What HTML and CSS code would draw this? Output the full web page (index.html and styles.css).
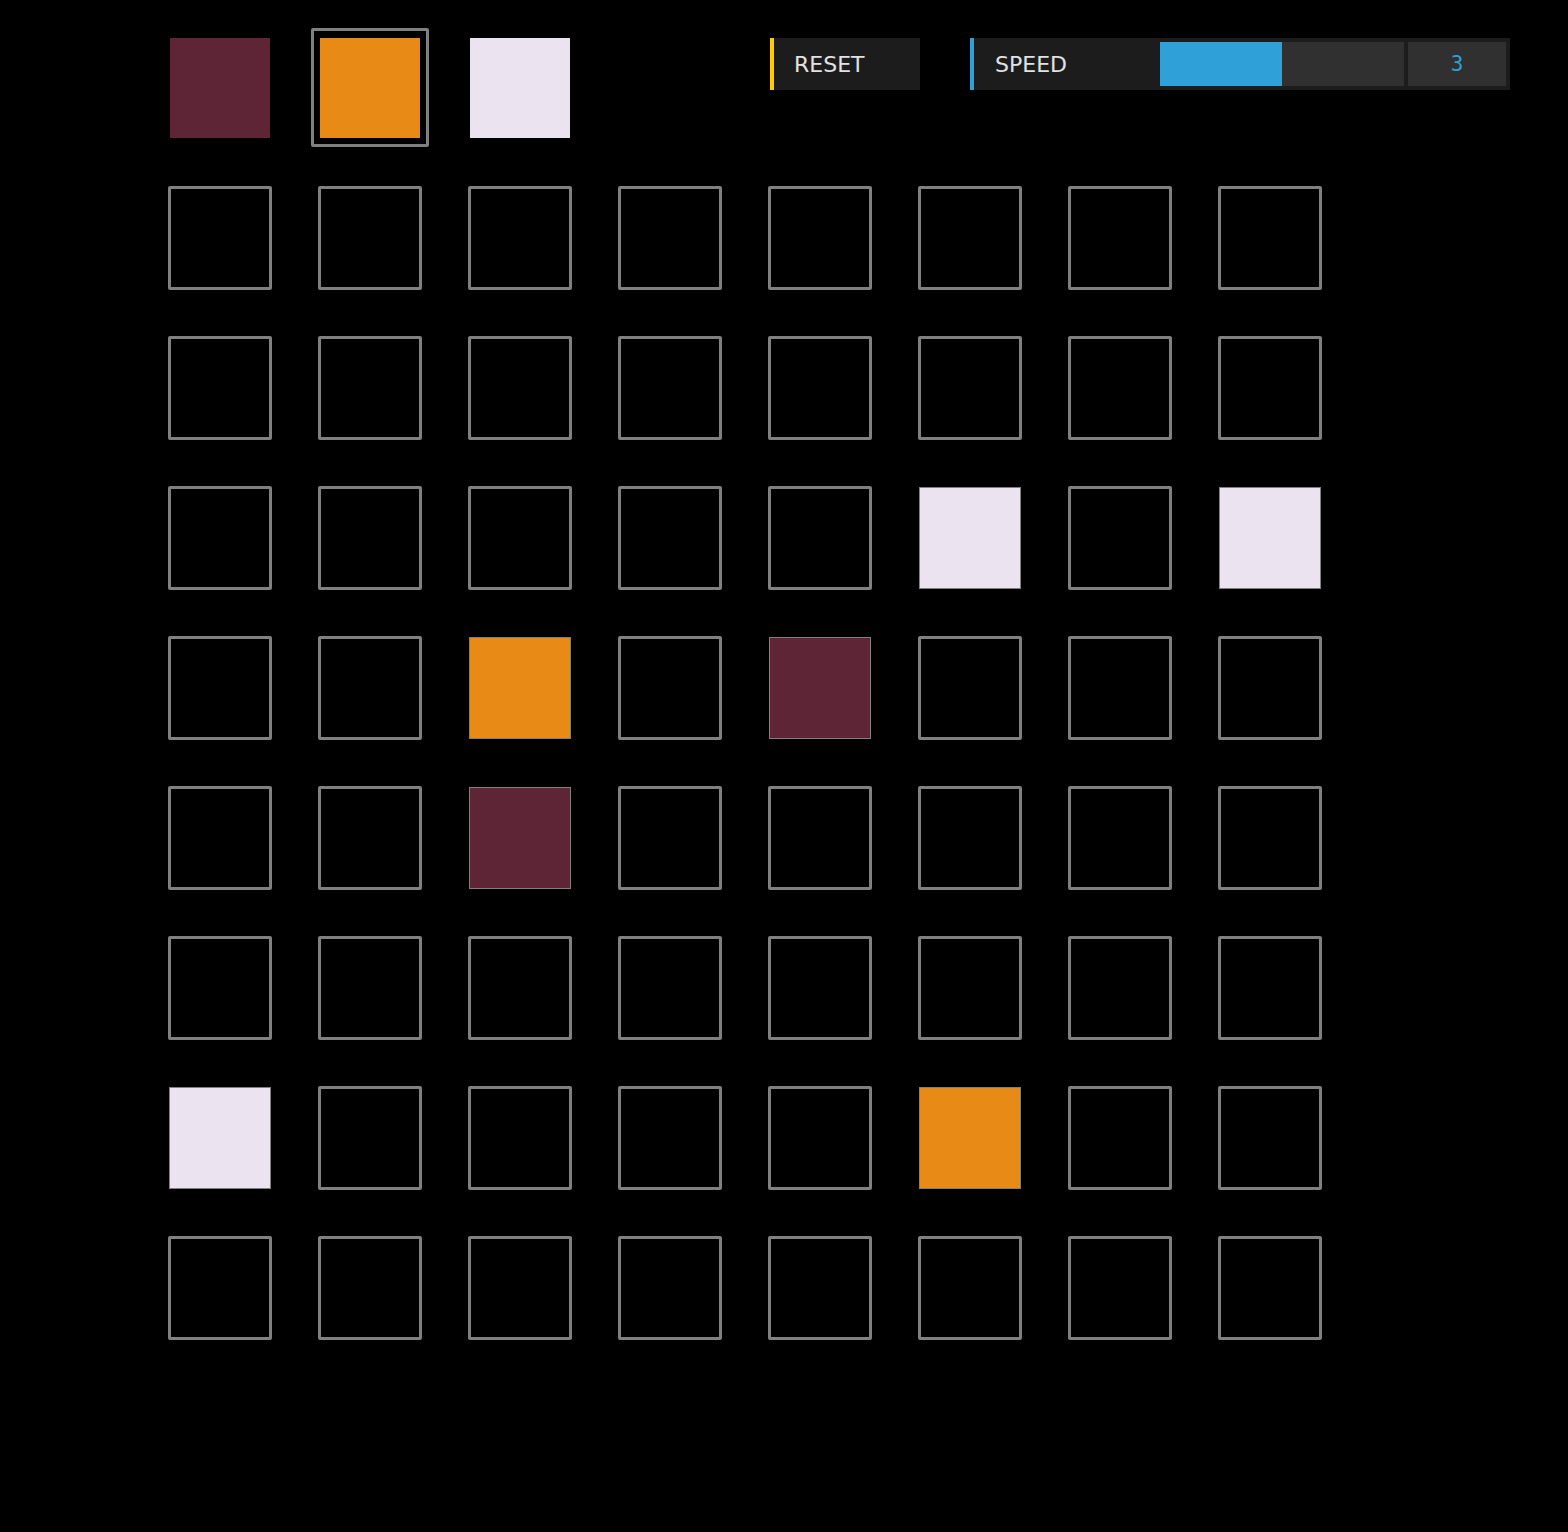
FILE: index.html
```html
<!DOCTYPE html>
<html lang="en">
<head>
  <meta charset="UTF-8">
  <title>Pixel Painter</title>
  <link rel="stylesheet" href="styles.css">
</head>
<body>
  <div class="toolbar">
    <div class="palette">
      <div class="slot"><div class="swatch maroon" data-color="maroon"></div></div>
      <div class="slot"><div class="swatch-frame selected"><div class="swatch orange" data-color="orange"></div></div></div>
      <div class="slot"><div class="swatch white" data-color="white"></div></div>
    </div>

    <button class="reset" id="reset">RESET</button>

    <div class="speed">
      <span class="speed-label">SPEED</span>
      <div class="slider"><div class="slider-fill" style="width: 50%"></div></div>
      <div class="speed-value">3</div>
    </div>
  </div>

  <div class="board" id="board"></div>

  <script>
    const ROWS = 8, COLS = 8;
    // painted cells: "row,col" -> colour
    const painted = {
      '2,5': 'white', '2,7': 'white',
      '3,2': 'orange', '3,4': 'maroon',
      '4,2': 'maroon',
      '6,0': 'white', '6,5': 'orange'
    };
    let current = 'orange';

    const board = document.getElementById('board');
    for (let r = 0; r < ROWS; r++) {
      for (let c = 0; c < COLS; c++) {
        const slot = document.createElement('div');
        slot.className = 'slot';
        const cell = document.createElement('div');
        const color = painted[r + ',' + c];
        cell.className = color ? 'cell filled ' + color : 'cell';
        cell.addEventListener('click', () => {
          cell.className = 'cell filled ' + current;
        });
        slot.appendChild(cell);
        board.appendChild(slot);
      }
    }

    document.getElementById('reset').addEventListener('click', () => {
      board.querySelectorAll('.cell').forEach(cell => cell.className = 'cell');
    });
  </script>
</body>
</html>
```

FILE: styles.css
```css
body {
  margin: 0;
  padding: 13px 0 0 145px;
  background: #000;
  font-family: "DejaVu Sans", sans-serif;
  color: #e2e2e2;
}

.toolbar { display: flex; align-items: flex-start; }
.palette { display: flex; }

.slot {
  width: 150px;
  height: 150px;
  display: flex;
  align-items: center;
  justify-content: center;
}

.swatch { width: 100px; height: 100px; cursor: pointer; }
.swatch-frame {
  padding: 7px 6px 6px;
  margin-top: -1px;
  border: 3px solid #808080;
  border-radius: 2px;
}

.maroon { background: #5d2536; }
.orange { background: #e88a16; }
.white { background: #ebe4f0; }

.reset {
  margin: 25px 0 0 175px;
  width: 150px;
  height: 52px;
  padding: 0 0 0 20px;
  text-align: left;
  background: #1c1c1c;
  border: none;
  border-left: 4px solid #ffcc00;
  color: #e2e2e2;
  font-family: "DejaVu Sans", sans-serif;
  font-size: 22px;
  cursor: pointer;
}

.speed {
  margin: 25px 0 0 50px;
  width: 540px;
  height: 52px;
  box-sizing: border-box;
  display: flex;
  align-items: center;
  gap: 4px;
  padding: 4px 4px 4px 21px;
  background: #1c1c1c;
  border-left: 4px solid #2fa0d8;
}
.speed-label { font-size: 22px; width: 161px; }
.slider {
  width: 244px;
  height: 44px;
  background: #303030;
}
.slider-fill { height: 100%; background: #2fa0d8; }
.speed-value {
  width: 98px;
  height: 44px;
  line-height: 44px;
  text-align: center;
  background: #303030;
  color: #2fa0d8;
  font-family: "DejaVu Sans Mono", monospace;
  font-size: 21px;
}

.board {
  display: grid;
  grid-template-columns: repeat(8, 150px);
}

.cell {
  width: 104px;
  height: 104px;
  box-sizing: border-box;
  border: 3px solid #808080;
  border-radius: 2px;
  cursor: pointer;
}
.cell.filled {
  width: 102px;
  height: 102px;
  border-width: 1px;
  border-radius: 0;
}
```
